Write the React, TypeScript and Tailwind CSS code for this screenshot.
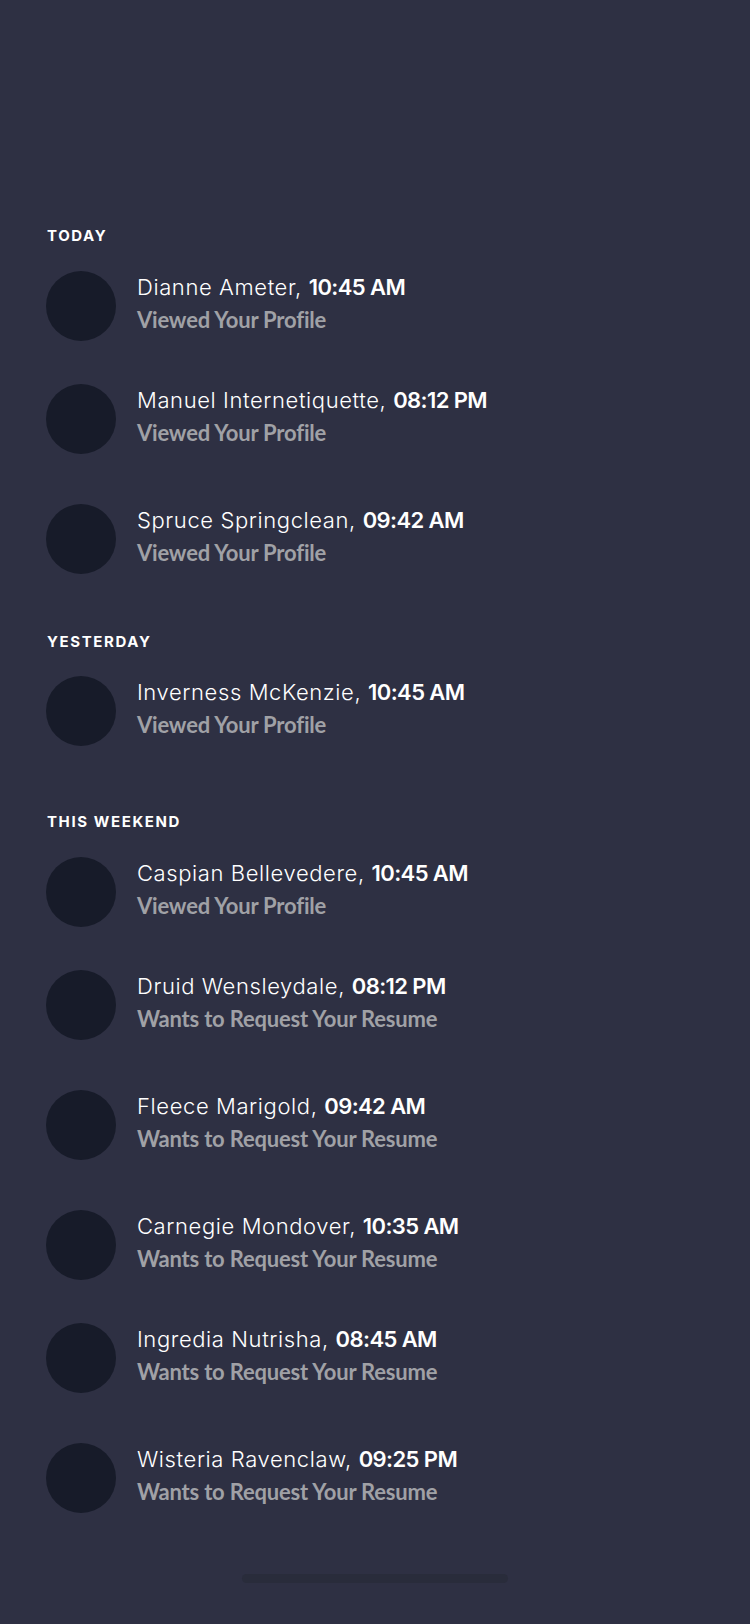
import React from "react";

type Item = { name: string; time: string; action: string; mt: string };

const nameFont = { fontFamily: "Inter, 'Noto Sans', sans-serif" };

function Header({ label, mt }: { label: string; mt: string }) {
  return (
    <div
      className={`${mt} h-[15px] pl-[47px] text-[15px] leading-[15px] font-bold tracking-[1.6px] text-white`}
      style={nameFont}
    >
      {label}
    </div>
  );
}

function Row({ item }: { item: Item }) {
  return (
    <div className={`${item.mt} flex items-start pl-[46px]`}>
      <div className="h-[70px] w-[70px] shrink-0 rounded-full bg-[#171b29]" />
      <div className="ml-[21px] flex flex-col pt-[2px]">
        <div
          className="whitespace-nowrap text-[22px] leading-[28px] font-light tracking-[0.6px] text-white"
          style={nameFont}
        >
          {item.name},{" "}
          <span className="font-semibold tracking-[-0.6px]">{item.time}</span>
        </div>
        <div
          className="mt-[5px] whitespace-nowrap text-[22px] leading-[28px] font-bold tracking-[-0.2px] text-[#a0a1a6]"
          style={{ fontFamily: "Lato, 'Open Sans', sans-serif" }}
        >
          {item.action}
        </div>
      </div>
    </div>
  );
}

const today: Item[] = [
  { name: "Dianne Ameter", time: "10:45 AM", action: "Viewed Your Profile", mt: "mt-[28px]" },
  { name: "Manuel Internetiquette", time: "08:12 PM", action: "Viewed Your Profile", mt: "mt-[43px]" },
  { name: "Spruce Springclean", time: "09:42 AM", action: "Viewed Your Profile", mt: "mt-[50px]" },
];

const yesterday: Item[] = [
  { name: "Inverness McKenzie", time: "10:45 AM", action: "Viewed Your Profile", mt: "mt-[27px]" },
];

const weekend: Item[] = [
  { name: "Caspian Bellevedere", time: "10:45 AM", action: "Viewed Your Profile", mt: "mt-[28px]" },
  { name: "Druid Wensleydale", time: "08:12 PM", action: "Wants to Request Your Resume", mt: "mt-[43px]" },
  { name: "Fleece Marigold", time: "09:42 AM", action: "Wants to Request Your Resume", mt: "mt-[50px]" },
  { name: "Carnegie Mondover", time: "10:35 AM", action: "Wants to Request Your Resume", mt: "mt-[50px]" },
  { name: "Ingredia Nutrisha", time: "08:45 AM", action: "Wants to Request Your Resume", mt: "mt-[43px]" },
  { name: "Wisteria Ravenclaw", time: "09:25 PM", action: "Wants to Request Your Resume", mt: "mt-[50px]" },
];

export default function App() {
  return (
    <div className="flex min-h-[1624px] w-[750px] flex-col bg-[#2e3043] pt-[228px]">
      <Header label="TODAY" mt="mt-0" />
      {today.map((it) => (
        <Row key={it.name} item={it} />
      ))}
      <Header label="YESTERDAY" mt="mt-[60px]" />
      {yesterday.map((it) => (
        <Row key={it.name} item={it} />
      ))}
      <Header label="THIS WEEKEND" mt="mt-[68px]" />
      {weekend.map((it) => (
        <Row key={it.name} item={it} />
      ))}
      <div className="mx-auto mt-[61px] h-[9px] w-[266px] rounded-full bg-[#292c3b]" />
    </div>
  );
}
